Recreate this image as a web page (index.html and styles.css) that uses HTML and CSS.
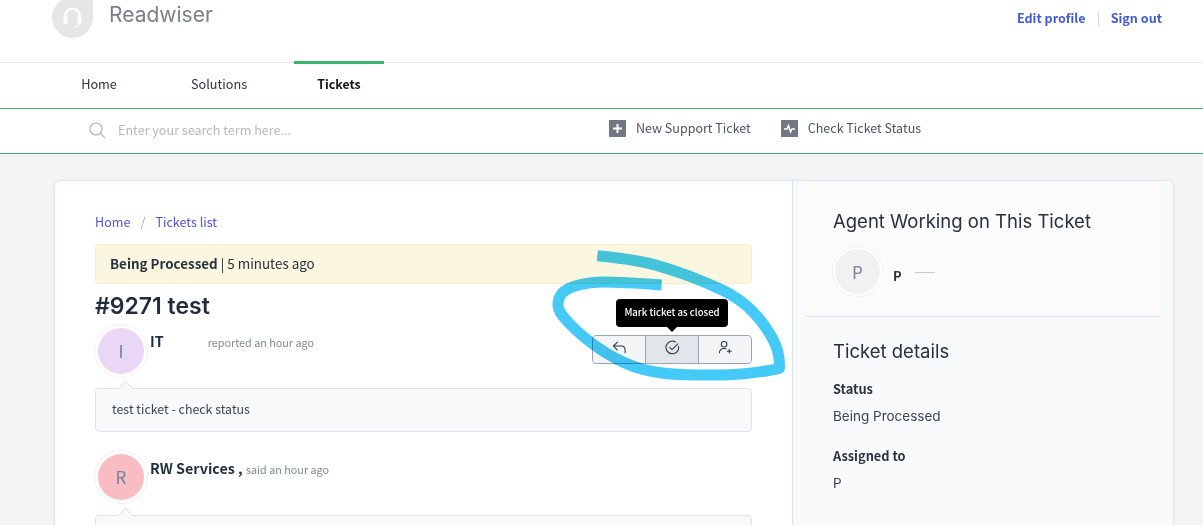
FILE: index.html
```html
<!DOCTYPE html>
<html lang="en">
<head>
  <meta charset="UTF-8" />
  <title>Readwiser | Ticket #9271</title>
  <link rel="stylesheet" href="styles.css">
</head>
<body>
  <!-- header -->
  <header class="topBar">
    <div class="brand">
      <div class="logo">
        <svg width="21" height="23" viewBox="0 0 26 26" fill="none" stroke="#fff" stroke-width="2.6">
          <path d="M4 15V11a9 9 0 0 1 18 0v4"/>
          <rect x="2" y="12" width="5" height="9" rx="2" fill="#fff" stroke="none"/>
          <rect x="19" y="12" width="5" height="9" rx="2" fill="#fff" stroke="none"/>
          <path d="M22 20c0 3-3 4-7 4" stroke-width="1.2"/>
        </svg>
      </div>
      <span class="brandName">Readwiser</span>
    </div>
    <div class="userLinks">
      <a href="#">Edit profile</a>
      <span class="sep"></span>
      <a href="#">Sign out</a>
    </div>
  </header>

  <nav class="tabs">
    <a href="#" class="tab">Home</a>
    <a href="#" class="tab">Solutions</a>
    <a href="#" class="tab active">Tickets</a>
  </nav>

  <!-- search -->
  <div class="searchBar">
    <div class="search">
      <svg width="17" height="17" viewBox="0 0 17 17" fill="none" stroke="#a9afb5" stroke-width="1.1">
        <circle cx="7" cy="7" r="6"/>
        <path d="M11.4 11.4l4.8 4.8"/>
      </svg>
      <span class="placeholder">Enter your search term here...</span>
    </div>
    <div class="actions">
      <a href="#" class="action">
        <svg width="17" height="17" viewBox="0 0 17 17">
          <rect width="17" height="17" fill="#6f7884"/>
          <path d="M8.5 4v9M4 8.5h9" stroke="#fff" stroke-width="2"/>
        </svg>
        New Support Ticket
      </a>
      <a href="#" class="action">
        <svg width="17" height="17" viewBox="0 0 17 17">
          <rect width="17" height="17" fill="#6f7884"/>
          <path d="M3 9h3l1.5-3.5L9.500 12l1.500-3h3" fill="none" stroke="#fff" stroke-width="1.400"/>
        </svg>
        Check Ticket Status
      </a>
    </div>
  </div>

  <main class="card">
    <section class="ticket">
      <div class="crumbs">
        <a href="#">Home</a>
        <span class="slash">/</span>
        <a href="#">Tickets list</a>
      </div>
      <div class="statusBox"><b>Being Processed</b> | 5 minutes ago</div>
      <h1 class="ticketTitle">#9271 test</h1>

      <div class="entry">
        <div class="avatar lilac">I</div>
        <div class="who"><b>IT</b><span class="when reported">reported an hour ago</span></div>
        <div class="btnGroup">
          <button class="iconBtn">
            <svg width="15" height="15" viewBox="0 0 16 16" fill="none" stroke="#2b3441" stroke-width="1.100">
              <path d="M6 2L1.500 6.500 6 11"/>
              <path d="M1.500 6.500H10c2.500 0 4 2 4 4.500v3"/>
            </svg>
          </button>
          <button class="iconBtn current">
            <svg width="15" height="15" viewBox="0 0 16 16" fill="none" stroke="#2b3441" stroke-width="1.100">
              <path d="M14.500 6.500A6.800 6.800 0 1 1 11.500 2.200"/>
              <path d="M4.800 7.500l2.700 2.700L14 3.800"/>
            </svg>
          </button>
          <button class="iconBtn">
            <svg width="15" height="15" viewBox="0 0 16 16" fill="none" stroke="#2b3441" stroke-width="1.100">
              <circle cx="6.500" cy="4.500" r="3"/>
              <path d="M1.500 14c0-3 2-5 5-5 1 0 1.800.2 2.500.6"/>
              <path d="M12 9.500v5M9.500 12h5"/>
            </svg>
          </button>
          <div class="tooltip">Mark ticket as closed</div>
        </div>
      </div>
      <div class="message">test ticket - check status</div>

      <div class="entry second">
        <div class="avatar pink">R</div>
        <div class="who"><b>RW Services ,</b> <span class="when">said an hour ago</span></div>
      </div>
      <div class="message"></div>
    </section>

    <aside class="side">
      <div class="sideTop">
        <h2>Agent Working on This Ticket</h2>
        <div class="agent">
          <div class="avatar grey">P</div>
          <span class="agentName">P<i class="smudge"></i></span>
        </div>
      </div>
      <div class="sideDetails">
        <h2>Ticket details</h2>
        <div class="label">Status</div>
        <div class="value">Being Processed</div>
        <div class="label">Assigned to</div>
        <div class="value">P</div>
      </div>
    </aside>
  </main>

  <!-- blue marker scribble -->
  <svg class="scribble" width="260" height="150" viewBox="0 0 780 450" fill="none">
    <path stroke="#45c9f6" stroke-width="33" stroke-linejoin="round" d="M172 47Q300 60 350 76Q400 90 450 109Q500 128 545 149Q590 170 625 202Q660 235 680 267Q703 300 712 330Q720 360 718 385Q640 402 570 404Q500 406 440 404Q380 403 330 393Q280 383 230 357Q180 330 143 300Q105 270 80 242Q55 215 54 197Q53 180 62 165Q72 150 100 140Q130 130 170 127Q210 124 365 135"/>
  </svg>
</body>
</html>
```

FILE: styles.css
```css
* {
  box-sizing: border-box;
}
html, body {
  height: 525px;
  overflow: hidden;
}
body {
  margin: 0;
  background: #f3f4f6;
  color: #27313f;
  font-family: "Noto Sans CJK SC", "Noto Sans", sans-serif;
  font-size: 13px;
  line-height: 20px;
  position: relative;
}
a {
  text-decoration: none;
  color: inherit;
}

/* header */
.topBar {
  height: 62px;
  background: white;
  padding: 0 41px 0 52px;
  display: flex;
  justify-content: space-between;
  overflow: hidden;
}
.brand {
  display: flex;
  align-items: flex-start;
}
.logo {
  width: 41px;
  height: 41px;
  margin-top: -3px;
  background: #e6e6e6;
  border-radius: 50% 0 50% 50%;
  display: flex;
  align-items: center;
  justify-content: center;
}
.brandName {
  margin: 2px 0 0 16px;
  font-family: Inter, sans-serif;
  font-size: 21px;
  line-height: 26px;
  color: #79808a;
}
.userLinks {
  display: flex;
  align-items: center;
  height: 36px;
  gap: 12px;
  color: #3f5bd9;
  font-weight: 700;
  font-size: 12.6px;
}
.sep {
  width: 1px;
  height: 15px;
  background: #d5dbe3;
}

.tabs {
  height: 47px;
  background: white;
  border-top: 1px solid #ebebeb;
  border-bottom: 1px solid #3cb371;
  padding-left: 54px;
  display: flex;
  gap: 30px;
}
.tab {
  width: 90px;
  text-align: center;
  line-height: 41px;
  font-size: 12.7px;
  color: #2b3441;
}
.tab.active {
  color: #12161c;
  font-weight: 700;
  font-size: 12.4px;
  border-top: 3px solid #3cb371;
  margin-top: -2px;
  height: 46px;
}

/* search */
.searchBar {
  height: 45px;
  background: white;
  border-bottom: 1px solid #3cb371;
  padding-left: 89px;
  display: flex;
  align-items: center;
}
.search {
  width: 520px;
  display: flex;
  align-items: center;
  gap: 12px;
  margin-top: -2px;
}
.placeholder {
  color: #b4b9c0;
  font-size: 12.6px;
}
.actions {
  display: flex;
  gap: 30px;
  margin-top: -6px;
}
.action {
  display: flex;
  align-items: center;
  gap: 10px;
  color: #4a5563;
  font-size: 12.5px;
}

/* main card */
.card {
  margin: 26px 29px 0 54px;
  height: 400px;
  display: flex;
  background: white;
  border: 1px solid #dfe3e8;
  border-radius: 6px;
  box-shadow: 0 1px 3px rgba(0,0,0,0.06);
}
.ticket {
  width: 737px;
  padding: 31px 40px 0;
  overflow: hidden;
}
.crumbs {
  height: 21px;
  color: #4f54d8;
  font-size: 12.6px;
  display: flex;
  gap: 10px;
}
.slash {
  color: #a4abb5;
}
.statusBox {
  margin-top: 11px;
  height: 40px;
  padding: 0 14px;
  background: #faf6df;
  border: 1px solid #f7ecd2;
  border-radius: 4px;
  line-height: 37px;
  font-size: 13.4px;
}
.ticketTitle {
  margin: 7px 0 0;
  font-family: Inter, sans-serif;
  font-size: 23px;
  line-height: 30px;
  font-weight: 600;
  color: #1f2d3d;
}
.entry {
  margin-top: 4px;
  height: 56px;
  display: flex;
  position: relative;
  font-size: 14.3px;
}
.entry.second {
  height: 57px;
  margin-top: 19px;
}
.avatar {
  width: 52px;
  height: 52px;
  border-radius: 50%;
  border: 3px solid white;
  box-shadow: 0 0 0 1px #f0f0f2;
  display: flex;
  align-items: center;
  justify-content: center;
  flex-shrink: 0;
  font-size: 17px;
  color: #6f8399;
}
.lilac { background: #ead6f5; }
.pink { background: #f9bcc2; }
.grey {
  width: 49px;
  height: 49px;
  border-width: 2px;
  background: #f2f0f0;
}
.who {
  margin: 6px 0 0 3px;
  color: #1f2d3d;
}
.second .who {
  margin-top: 7px;
}
.when {
  font-size: 10.8px;
  color: #7e8a96;
}
.reported {
  margin-left: 44px;
}
.btnGroup {
  position: absolute;
  right: 0;
  top: 10px;
  width: 160px;
  height: 29px;
  display: flex;
  border: 1px solid #9aa4b3;
  border-radius: 4px;
  overflow: visible;
}
.iconBtn {
  flex: 1;
  padding: 0 0 4px;
  border: none;
  border-left: 1px solid #9aa4b3;
  background: #f3f4f6;
  display: flex;
  align-items: center;
  justify-content: center;
}
.iconBtn:first-child {
  border-left: none;
  border-radius: 4px 0 0 4px;
}
.iconBtn:nth-child(3) {
  border-radius: 0 4px 4px 0;
}
.iconBtn.current {
  background: #e2e5ea;
}
.tooltip {
  position: absolute;
  left: 23px;
  top: -37px;
  width: 112px;
  height: 28px;
  background: black;
  color: white;
  border-radius: 4px;
  font-size: 9.6px;
  font-weight: 500;
  line-height: 27px;
  text-align: center;
  white-space: nowrap;
}
.tooltip::after {
  content: "";
  position: absolute;
  left: 51px;
  top: 28px;
  border: 5px solid transparent;
  border-top-color: black;
  border-bottom: none;
}
.message {
  position: relative;
  height: 44px;
  margin-top: 7px;
  padding: 0 16px;
  background: #f8f9fb;
  border: 1px solid #dfe3e8;
  border-radius: 4px;
  line-height: 41px;
  color: #3a4655;
  font-size: 12.4px;
}
.message::before {
  content: "";
  position: absolute;
  left: 24px;
  top: -6px;
  width: 10px;
  height: 10px;
  background: #f8f9fb;
  border-left: 1px solid #dfe3e8;
  border-top: 1px solid #dfe3e8;
  transform: rotate(45deg);
}

/* right side */
.side {
  flex: 1;
  background: #f9fafc;
  border-left: 1px solid #dfe3e8;
  border-radius: 0 6px 6px 0;
  padding: 0 12px;
}
.side h2 {
  margin: 0;
  font-family: Inter, sans-serif;
  font-weight: 400;
  font-size: 18.5px;
  line-height: 26px;
  color: #27313f;
}
.sideTop {
  height: 136px;
  padding: 27px 0 0 28px;
  background: #fbfbfc;
  border-bottom: 1px solid #dfe1e5;
}
.agent {
  margin-top: 13px;
  display: flex;
  align-items: center;
  gap: 12px;
}
.agentName {
  font-weight: 700;
  font-size: 13px;
  display: flex;
  align-items: center;
  padding-top: 8px;
  margin-left: -1px;
}
.smudge {
  display: block;
  width: 20px;
  height: 1px;
  margin: -6px 0 0 13px;
  background: #c5cad2;
}
.sideDetails {
  padding: 21px 0 0 28px;
}
.label {
  margin-top: 15px;
  font-weight: 700;
  font-size: 12.8px;
  color: #2b3441;
}
.value {
  margin-top: 7px;
  margin-bottom: 20px;
  font-family: Inter, sans-serif;
  font-size: 13.5px;
  color: #3a4655;
}

/* marker scribble lies over the ticket */
.scribble {
  position: absolute;
  left: 540px;
  top: 240px;
  pointer-events: none;
  mix-blend-mode: multiply;
}
```
